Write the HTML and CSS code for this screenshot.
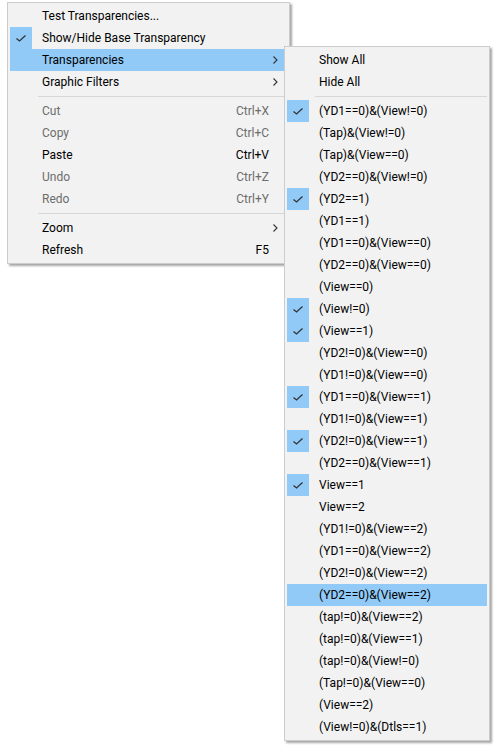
FILE: index.html
```html
<!DOCTYPE html>
<html>
<head>
<meta charset="utf-8">
<link rel="stylesheet" href="styles.css">
</head>
<body>
<div class="stage">
  <div class="menu main">
    <div class="item"><span class="chk"></span><span class="label">Test Transparencies...</span></div>
    <div class="item"><span class="chk on"><svg width="22" height="22" viewBox="0 0 22 22"><polyline points="6.5,11.5 9.5,14 15.5,8.5" /></svg></span><span class="label">Show/Hide Base Transparency</span></div>
    <div class="item hl"><span class="chk"></span><span class="label">Transparencies</span><span class="arrow"><svg width="5" height="8" viewBox="0 0 5 8"><polyline points="0.5,0.5 4,4 0.5,7.5" /></svg></span></div>
    <div class="item"><span class="chk"></span><span class="label">Graphic Filters</span><span class="arrow"><svg width="5" height="8" viewBox="0 0 5 8"><polyline points="0.5,0.5 4,4 0.5,7.5" /></svg></span></div>
    <div class="sep"></div>
    <div class="item dis"><span class="chk"></span><span class="label">Cut</span><span class="key">Ctrl+X</span></div>
    <div class="item dis"><span class="chk"></span><span class="label">Copy</span><span class="key">Ctrl+C</span></div>
    <div class="item"><span class="chk"></span><span class="label">Paste</span><span class="key">Ctrl+V</span></div>
    <div class="item dis"><span class="chk"></span><span class="label">Undo</span><span class="key">Ctrl+Z</span></div>
    <div class="item dis"><span class="chk"></span><span class="label">Redo</span><span class="key">Ctrl+Y</span></div>
    <div class="sep"></div>
    <div class="item"><span class="chk"></span><span class="label">Zoom</span><span class="arrow"><svg width="5" height="8" viewBox="0 0 5 8"><polyline points="0.5,0.5 4,4 0.5,7.5" /></svg></span></div>
    <div class="item"><span class="chk"></span><span class="label">Refresh</span><span class="key">F5</span></div>
  </div>

  <div class="menu sub">
    <div class="item"><span class="chk"></span><span class="label">Show All</span></div>
    <div class="item"><span class="chk"></span><span class="label">Hide All</span></div>
    <div class="sep"></div>
    <div class="item"><span class="chk on"><svg width="22" height="22" viewBox="0 0 22 22"><polyline points="6.5,11.5 9.5,14 15.5,8.5" /></svg></span><span class="label">(YD1==0)&amp;(View!=0)</span></div>
    <div class="item"><span class="chk"></span><span class="label">(Tap)&amp;(View!=0)</span></div>
    <div class="item"><span class="chk"></span><span class="label">(Tap)&amp;(View==0)</span></div>
    <div class="item"><span class="chk"></span><span class="label">(YD2==0)&amp;(View!=0)</span></div>
    <div class="item"><span class="chk on"><svg width="22" height="22" viewBox="0 0 22 22"><polyline points="6.5,11.5 9.5,14 15.5,8.5" /></svg></span><span class="label">(YD2==1)</span></div>
    <div class="item"><span class="chk"></span><span class="label">(YD1==1)</span></div>
    <div class="item"><span class="chk"></span><span class="label">(YD1==0)&amp;(View==0)</span></div>
    <div class="item"><span class="chk"></span><span class="label">(YD2==0)&amp;(View==0)</span></div>
    <div class="item"><span class="chk"></span><span class="label">(View==0)</span></div>
    <div class="item"><span class="chk on"><svg width="22" height="22" viewBox="0 0 22 22"><polyline points="6.5,11.5 9.5,14 15.5,8.5" /></svg></span><span class="label">(View!=0)</span></div>
    <div class="item"><span class="chk on"><svg width="22" height="22" viewBox="0 0 22 22"><polyline points="6.5,11.5 9.5,14 15.5,8.5" /></svg></span><span class="label">(View==1)</span></div>
    <div class="item"><span class="chk"></span><span class="label">(YD2!=0)&amp;(View==0)</span></div>
    <div class="item"><span class="chk"></span><span class="label">(YD1!=0)&amp;(View==0)</span></div>
    <div class="item"><span class="chk on"><svg width="22" height="22" viewBox="0 0 22 22"><polyline points="6.5,11.5 9.5,14 15.5,8.5" /></svg></span><span class="label">(YD1==0)&amp;(View==1)</span></div>
    <div class="item"><span class="chk"></span><span class="label">(YD1!=0)&amp;(View==1)</span></div>
    <div class="item"><span class="chk on"><svg width="22" height="22" viewBox="0 0 22 22"><polyline points="6.5,11.5 9.5,14 15.5,8.5" /></svg></span><span class="label">(YD2!=0)&amp;(View==1)</span></div>
    <div class="item"><span class="chk"></span><span class="label">(YD2==0)&amp;(View==1)</span></div>
    <div class="item"><span class="chk on"><svg width="22" height="22" viewBox="0 0 22 22"><polyline points="6.5,11.5 9.5,14 15.5,8.5" /></svg></span><span class="label">View==1</span></div>
    <div class="item"><span class="chk"></span><span class="label">View==2</span></div>
    <div class="item"><span class="chk"></span><span class="label">(YD1!=0)&amp;(View==2)</span></div>
    <div class="item"><span class="chk"></span><span class="label">(YD1==0)&amp;(View==2)</span></div>
    <div class="item"><span class="chk"></span><span class="label">(YD2!=0)&amp;(View==2)</span></div>
    <div class="item hl"><span class="chk"></span><span class="label">(YD2==0)&amp;(View==2)</span></div>
    <div class="item"><span class="chk"></span><span class="label">(tap!=0)&amp;(View==2)</span></div>
    <div class="item"><span class="chk"></span><span class="label">(tap!=0)&amp;(View==1)</span></div>
    <div class="item"><span class="chk"></span><span class="label">(tap!=0)&amp;(View!=0)</span></div>
    <div class="item"><span class="chk"></span><span class="label">(Tap!=0)&amp;(View==0)</span></div>
    <div class="item"><span class="chk"></span><span class="label">(View==2)</span></div>
    <div class="item"><span class="chk"></span><span class="label">(View!=0)&amp;(Dtls==1)</span></div>
  </div>
</div>
</body>
</html>
```

FILE: styles.css
```css
html, body {
  margin: 0;
  padding: 0;
  background: #ffffff;
}

body {
  font-family: Roboto, "Noto Sans", sans-serif;
  font-size: 12px;
  color: #000000;
}

.stage {
  position: relative;
  width: 500px;
  height: 747px;
}

.menu {
  background: #f2f2f2;
  border: 1px solid #cccccc;
  padding: 2px;
  box-sizing: border-box;
  box-shadow: 2px 2px 2px rgba(0, 0, 0, 0.35);
  display: flex;
  flex-direction: column;
}

.main {
  position: absolute;
  left: 7px;
  top: 2px;
  width: 283px;
}

.sub {
  position: absolute;
  left: 284px;
  top: 46px;
  width: 206px;
  z-index: 2;
}

.item {
  height: 22px;
  display: flex;
  align-items: center;
  white-space: nowrap;
}

.item.hl {
  background: #91c9f7;
}

.item.dis {
  color: #6d6d6d;
}

.chk {
  width: 22px;
  height: 22px;
  margin-right: 10px;
  flex: none;
}

.chk.on {
  background: #91c9f7;
}

.chk svg {
  display: block;
}

.chk polyline {
  fill: none;
  stroke: #333333;
  stroke-width: 1.3;
}

.label {
  flex: 1;
}

.key {
  margin-right: 18px;
}

.arrow {
  margin-right: 9px;
  display: flex;
}

.arrow polyline {
  fill: none;
  stroke: #333333;
  stroke-width: 1.1;
}

.sep {
  height: 7px;
  margin-left: 28px;
  position: relative;
}

.sep::after {
  content: "";
  display: block;
  height: 1px;
  margin-top: 3px;
  background: #d7d7d7;
}
```
